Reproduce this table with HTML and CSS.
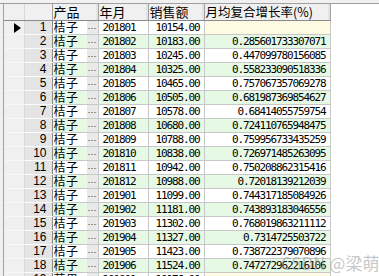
FILE: index.html
```html
<!DOCTYPE html>
<html>
<head>
<meta charset="utf-8">
<link rel="stylesheet" href="styles.css">
</head>
<body>
<div class="window">
  <div class="topband"></div>
  <div class="main">
    <div class="leftband"></div>
    <div class="gridwrap">
      <table class="grid">
        <colgroup>
          <col class="c-ind"><col class="c-num"><col class="c-prod"><col class="c-ym"><col class="c-sales"><col class="c-rate">
        </colgroup>
        <thead>
          <tr>
            <th class="h-ind"></th>
            <th class="h-num"></th>
            <th class="h-text">产品</th>
            <th class="h-text">年月</th>
            <th class="h-text">销售额</th>
            <th class="h-text h-rate"><span>月均复合增长率(%)</span></th>
          </tr>
        </thead>
        <tbody id="rows"></tbody>
      </table>
      <div class="watermark">CSDN @梁萌</div>
    </div>
  </div>
</div>
<script src="app.js"></script>
</body>
</html>
```

FILE: app.js
```js
const data = [
  ["桔子","201801","10154.00",null],
  ["桔子","201802","10183.00","0.285601733307071"],
  ["桔子","201803","10245.00","0.447099780156085"],
  ["桔子","201804","10325.00","0.558233090518336"],
  ["桔子","201805","10465.00","0.757067357069278"],
  ["桔子","201806","10505.00","0.681987369854627"],
  ["桔子","201807","10578.00","0.68414055759754"],
  ["桔子","201808","10680.00","0.724110765948475"],
  ["桔子","201809","10788.00","0.759956733435259"],
  ["桔子","201810","10838.00","0.726971485263095"],
  ["桔子","201811","10942.00","0.750208862315416"],
  ["桔子","201812","10988.00","0.72018139212039"],
  ["桔子","201901","11099.00","0.744317185084926"],
  ["桔子","201902","11181.00","0.743893183046556"],
  ["桔子","201903","11302.00","0.768019863211112"],
  ["桔子","201904","11327.00","0.7314725503722"],
  ["桔子","201905","11423.00","0.738722379070896"],
  ["桔子","201906","11524.00","0.747272962216106"],
  ["苹果","201801","10176.00",null]
];
const tb = document.getElementById("rows");
data.forEach((r, i) => {
  const tr = document.createElement("tr");
  tr.className = (i % 2 === 1) ? "even" : "odd";
  const ind = i === 0
    ? '<svg width="7" height="10" viewBox="0 0 7 10"><path d="M0 0 L7 5 L0 10 Z" fill="#000"/></svg>'
    : '';
  tr.innerHTML =
    '<td class="ind">' + ind + '</td>' +
    '<td class="num">' + (i + 1) + '</td>' +
    '<td class="prod"><div class="prodin"><span class="ptxt">' + r[0] + '</span><span class="dots">…</span></div></td>' +
    '<td class="ym">' + r[1] + '</td>' +
    '<td class="sales">' + r[2] + '</td>' +
    '<td class="rate' + (r[3] === null ? ' null' : '') + '">' + (r[3] === null ? '' : r[3]) + '</td>';
  tb.appendChild(tr);
});
```

FILE: styles.css
```css
html, body {
  margin: 0;
  padding: 0;
  background: #ffffff;
  overflow: hidden;
}
.window {
  width: 379px;
  height: 276px;
  display: flex;
  flex-direction: column;
  background: #ffffff;
}
.topband {
  height: 3px;
  background: #f0f0f0;
  border-bottom: 1px solid #a0a0a0;
  flex: none;
}
.main {
  display: flex;
  flex: 1;
  min-height: 0;
}
.leftband {
  width: 3px;
  background: #f0f0f0;
  border-right: 1px solid #a0a0a0;
  flex: none;
}
.gridwrap {
  position: relative;
  flex: 1;
  overflow: hidden;
}
.grid {
  border-collapse: collapse;
  table-layout: fixed;
  width: 326px;
}
.c-ind { width: 20px; }
.c-num { width: 28px; }
.c-prod { width: 46px; }
.c-ym { width: 50px; }
.c-sales { width: 56px; }
.c-rate { width: 126px; }

th, td {
  padding: 0;
  box-sizing: border-box;
  white-space: nowrap;
}
thead th {
  height: 16px;
  background: #f0f0f0;
  border-right: 1px solid #a0a0a0;
  border-bottom: 1px solid #8a8a8a;
  font-family: "Noto Sans CJK SC", sans-serif;
  font-weight: normal;
  font-size: 13px;
  line-height: 15px;
  color: #000;
  text-align: left;
  padding-left: 1px;
  box-shadow: inset -2px 0 0 #e3e3e3;
}
thead th.h-ind {
  border-right: 1px solid #d8d8d8;
  box-shadow: none;
}
thead th.h-num {
  box-shadow: none;
}
thead th.h-rate span {
  display: inline-block;
  font-size: 12.5px;
}
tbody td {
  height: 14px;
  border-right: 1px solid #c8c8c8;
  border-bottom: 1px solid #c8c8c8;
  line-height: 13px;
  color: #000;
  overflow: hidden;
}
tr.even td { background: #e5f9e5; }
tr.odd td { background: #ffffff; }
tbody td.ind {
  background: #f0f0f0 !important;
  border-right: 1px solid #d8d8d8;
  border-bottom: 1px solid #f8f8f8;
  text-align: center;
  padding-left: 4px;
}
tbody td.ind svg { display: block; margin: 2px 0 0 6px; }
tbody td.num {
  background: #e4e4e4 !important;
  border-right: 1px solid #8a8a8a;
  border-bottom: 1px solid #fafafa;
  font-family: "Liberation Sans", Arial, sans-serif;
  font-size: 12px;
  text-align: right;
  padding-right: 5px;
}
tbody td.prod {
  font-family: "Noto Sans CJK SC", sans-serif;
  font-size: 12px;
}
.prodin {
  display: flex;
  align-items: center;
  height: 13px;
}
.ptxt {
  flex: 1;
  padding-left: 1px;
  line-height: 12px;
  letter-spacing: 0.5px;
  margin-top: -1px;
}
.dots {
  width: 11px;
  height: 13px;
  background: #e9e9e9;
  font-family: "DejaVu Sans", sans-serif;
  font-size: 9px;
  line-height: 11px;
  text-align: center;
  color: #333;
}
td.ym, td.sales, td.rate {
  font-family: "DejaVu Sans Mono", monospace;
  font-size: 11px;
  letter-spacing: -1.12px;
}
td.ym { padding-left: 4px; }
td.sales { text-align: right; padding-right: 4px; }
td.rate { text-align: right; padding-right: 4px; }
tr td.rate.null { background: #fffbe3; }
.watermark {
  position: absolute;
  left: 277px;
  top: 249px;
  font-family: "Noto Sans CJK SC", sans-serif;
  font-size: 17px;
  line-height: 20px;
  color: rgba(150, 150, 150, 0.55);
  white-space: nowrap;
}
```
